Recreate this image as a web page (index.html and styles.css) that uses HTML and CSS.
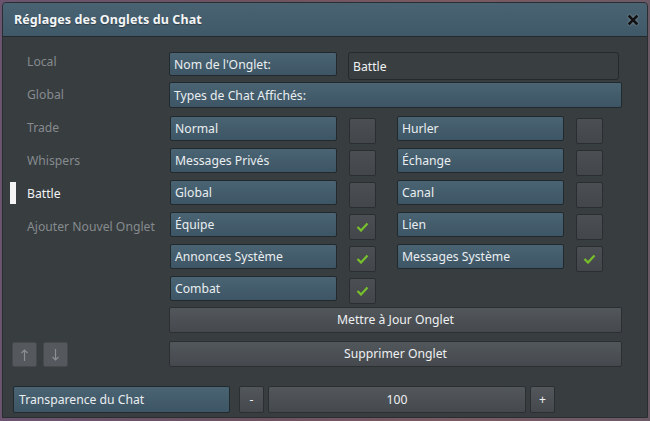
FILE: index.html
```html
<!DOCTYPE html>
<html lang="fr">
<head>
<meta charset="utf-8">
<link rel="stylesheet" href="styles.css">
</head>
<body>
<div class="window">
  <div class="titlebar">
    <span class="title">Réglages des Onglets du Chat</span>
    <svg class="close" width="10" height="10" viewBox="0 0 10 10"><path d="M1.5 1.5 L8.5 8.5 M8.5 1.5 L1.5 8.5" stroke="#111" stroke-width="2.6" stroke-linecap="square"/></svg>
  </div>
  <div class="content">
    <div class="main">
      <div class="sidebar">
        <ul class="tabs">
          <li>Local</li>
          <li>Global</li>
          <li>Trade</li>
          <li>Whispers</li>
          <li class="active">Battle</li>
          <li>Ajouter Nouvel Onglet</li>
        </ul>
        <div class="arrows">
          <div class="arrow">
            <svg width="9" height="14" viewBox="0 0 9 14"><path d="M4.5 2 V13 M1.5 5 L4.5 2 L7.5 5" stroke="#8a8f93" stroke-width="1.2" fill="none"/></svg>
          </div>
          <div class="arrow">
            <svg width="9" height="14" viewBox="0 0 9 14"><path d="M4.5 1 V12 M1.5 9 L4.5 12 L7.5 9" stroke="#8a8f93" stroke-width="1.2" fill="none"/></svg>
          </div>
        </div>
      </div>
      <div class="form">
        <div class="name-row">
          <div class="label name-label">Nom de l'Onglet:</div>
          <div class="input">Battle</div>
        </div>
        <div class="label types">Types de Chat Affichés:</div>
        <div class="options">
          <div class="option"><div class="label">Normal</div><div class="check"></div></div>
          <div class="option"><div class="label">Hurler</div><div class="check"></div></div>
          <div class="option"><div class="label">Messages Privés</div><div class="check"></div></div>
          <div class="option"><div class="label">Échange</div><div class="check"></div></div>
          <div class="option"><div class="label">Global</div><div class="check"></div></div>
          <div class="option"><div class="label">Canal</div><div class="check"></div></div>
          <div class="option"><div class="label">Équipe</div><div class="check on"><svg width="13" height="10" viewBox="0 0 13 10"><path d="M1.5 5 L5 8.5 L11.5 1.5" stroke="#78c02a" stroke-width="2.2" fill="none"/></svg></div></div>
          <div class="option"><div class="label">Lien</div><div class="check"></div></div>
          <div class="option"><div class="label">Annonces Système</div><div class="check on"><svg width="13" height="10" viewBox="0 0 13 10"><path d="M1.5 5 L5 8.5 L11.5 1.5" stroke="#78c02a" stroke-width="2.2" fill="none"/></svg></div></div>
          <div class="option"><div class="label">Messages Système</div><div class="check on"><svg width="13" height="10" viewBox="0 0 13 10"><path d="M1.5 5 L5 8.5 L11.5 1.5" stroke="#78c02a" stroke-width="2.2" fill="none"/></svg></div></div>
          <div class="option"><div class="label">Combat</div><div class="check on"><svg width="13" height="10" viewBox="0 0 13 10"><path d="M1.5 5 L5 8.5 L11.5 1.5" stroke="#78c02a" stroke-width="2.2" fill="none"/></svg></div></div>
        </div>
        <div class="button update">Mettre à Jour Onglet</div>
        <div class="button delete">Supprimer Onglet</div>
      </div>
    </div>
    <div class="bottom">
      <div class="label transp">Transparence du Chat</div>
      <div class="button small">-</div>
      <div class="button value">100</div>
      <div class="button small">+</div>
    </div>
  </div>
</div>
</body>
</html>
```

FILE: styles.css
```css
* { box-sizing: border-box; }
html, body { margin: 0; padding: 0; }
body {
  width: 650px;
  height: 421px;
  background: linear-gradient(90deg, #6a5470 0%, #6d5360 40%, #7a5a63 70%, #6b5a66 100%);
  font-family: "Noto Sans", "Open Sans", sans-serif;
  font-size: 12.2px;
  color: #e9edef;
  overflow: hidden;
  padding: 2px 2px 2px 2px;
}
.window {
  width: 646px;
  height: 416px;
  background: #383d40;
  border: 1px solid #2a2e31;
  border-radius: 4px 4px 0 0;
  display: flex;
  flex-direction: column;
}
.titlebar {
  height: 34px;
  flex: none;
  background: linear-gradient(#4a6373, #405968);
  border-bottom: 1px solid #22292e;
  border-radius: 3px 3px 0 0;
  display: flex;
  align-items: center;
  justify-content: space-between;
  padding: 0 9px 0 11px;
}
.title {
  font-weight: bold;
  font-size: 12.5px;
  color: #f4f6f7;
  text-shadow: 0 1px 1px rgba(0,0,0,0.35);
  letter-spacing: 0.1px;
}
.close { filter: drop-shadow(0 0 1px rgba(255,255,255,0.35)); }
.content {
  flex: 1;
  display: flex;
  flex-direction: column;
  padding: 8px 0 0 0;
}
.main { display: flex; }
.sidebar {
  width: 166px;
  display: flex;
  flex-direction: column;
}
.tabs {
  list-style: none;
  margin: 0;
  padding: 0;
}
.tabs li {
  height: 33px;
  line-height: 33px;
  padding-left: 24px;
  color: #868b8e;
  position: relative;
}
.tabs li.active { color: #f2f4f5; }
.tabs li.active::before {
  content: "";
  position: absolute;
  left: 7px;
  top: 5px;
  width: 6px;
  height: 22px;
  background: #f4f4f4;
}
.arrows {
  margin-top: auto;
  display: flex;
  gap: 6px;
  padding-left: 9px;
}
.arrow {
  width: 25px;
  height: 25px;
  background: #55595d;
  border: 1px solid #45494c;
  border-radius: 2px;
  display: flex;
  align-items: center;
  justify-content: center;
}
.form {
  width: 453px;
  display: flex;
  flex-direction: column;
  margin-top: 7px;
}
.label {
  background: linear-gradient(#4a6474, #3d5564);
  border: 1px solid #21292f;
  border-radius: 2px;
  height: 25px;
  line-height: 24px;
  padding-left: 4px;
  color: #eaeef0;
  white-space: nowrap;
}
.name-row {
  display: flex;
  align-items: flex-start;
  gap: 11px;
  height: 30px;
}
.name-label { width: 168px; height: 24px; line-height: 23px; }
.input {
  width: 271px;
  height: 28px;
  line-height: 27px;
  background: #393e41;
  border: 1px solid #25292c;
  border-radius: 3px;
  padding-left: 4px;
  color: #f0f2f3;
}
.types { height: 26px; line-height: 25px; margin-bottom: 8px; }
.options {
  display: grid;
  grid-template-columns: 206px 206px;
  column-gap: 21px;
  row-gap: 7px;
  padding-left: 1px;
}
.option {
  display: flex;
  gap: 12px;
  height: 25px;
}
.option .label { width: 167px; }
.check {
  width: 27px;
  height: 26px;
  margin-top: 2px;
  background: linear-gradient(#4b4f54, #43474b);
  border: 1px solid #2a2e31;
  border-radius: 2px;
  display: flex;
  align-items: center;
  justify-content: center;
}
.button {
  background: linear-gradient(#52575c, #45494d);
  border: 1px solid #2b2f32;
  border-radius: 2px;
  height: 26px;
  line-height: 24px;
  text-align: center;
  color: #eef0f1;
}
.update { margin-top: 6px; }
.delete { margin-top: 8px; }
.bottom {
  display: flex;
  margin-top: 19px;
  padding-left: 10px;
  gap: 4px;
}
.transp { width: 217px; height: 27px; line-height: 26px; padding-left: 5px; margin-right: 5px; }
.button.small { width: 25px; height: 27px; line-height: 25px; }
.button.value { width: 258px; height: 27px; line-height: 25px; }
```
